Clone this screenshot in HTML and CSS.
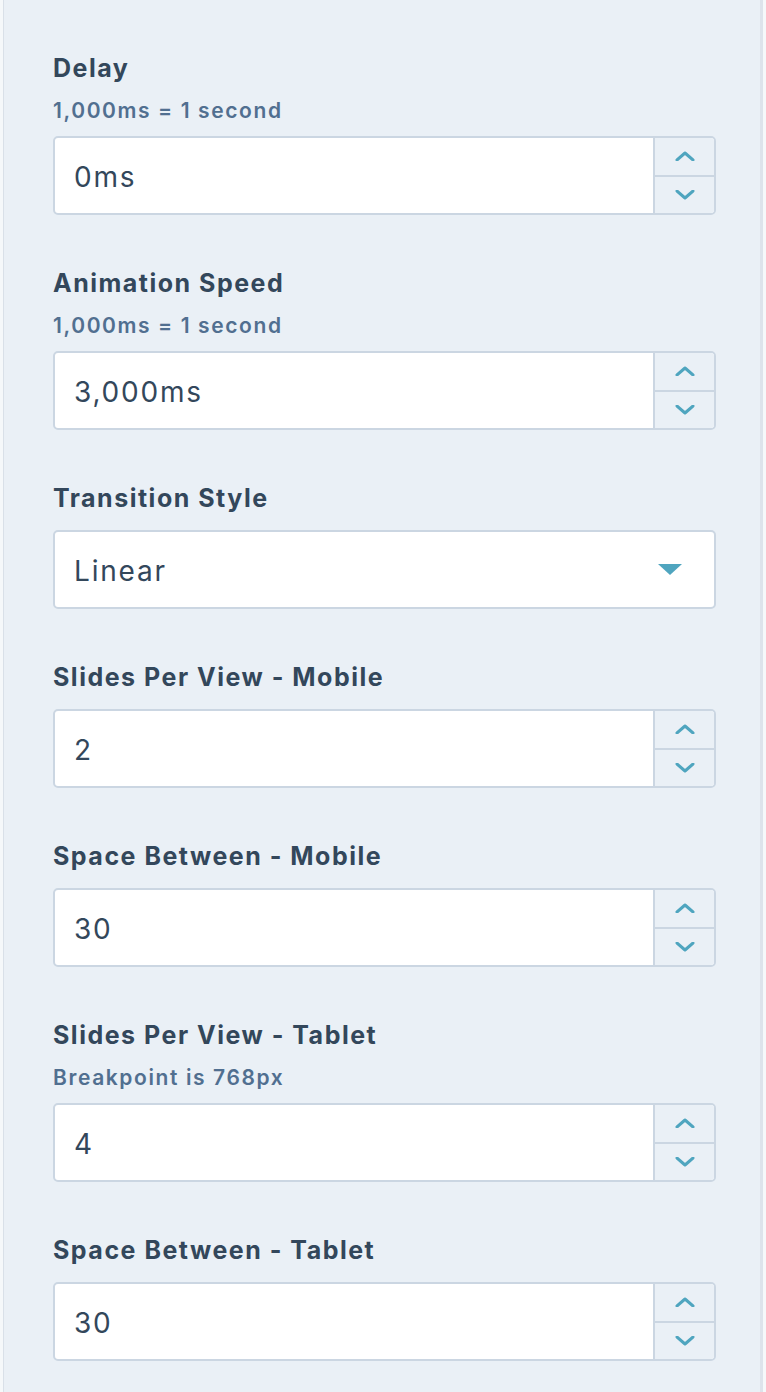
FILE: index.html
```html
<!DOCTYPE html>
<html lang="en">
<head>
    <meta charset="UTF-8">
    <meta name="viewport" content="width=device-width, initial-scale=1.0">
    <title>Slider Settings</title>
    <link rel="stylesheet" href="styles.css">
</head>
<body>

    <div class="settings-panel">

        <div class="field">
            <label class="field-label" for="delay">Delay</label>
            <p class="field-help">1,000ms = 1 second</p>
            <div class="number-input">
                <input type="text" id="delay" value="0ms">
                <div class="spinner">
                    <button class="spin-btn" aria-label="Increase"><svg viewBox="0 0 20 10" width="20" height="10"><polyline points="2,9 10,2 18,9"/></svg></button>
                    <button class="spin-btn" aria-label="Decrease"><svg viewBox="0 0 20 10" width="20" height="10"><polyline points="2,1 10,8 18,1"/></svg></button>
                </div>
            </div>
        </div>

        <div class="field">
            <label class="field-label" for="speed">Animation Speed</label>
            <p class="field-help">1,000ms = 1 second</p>
            <div class="number-input">
                <input type="text" id="speed" value="3,000ms">
                <div class="spinner">
                    <button class="spin-btn" aria-label="Increase"><svg viewBox="0 0 20 10" width="20" height="10"><polyline points="2,9 10,2 18,9"/></svg></button>
                    <button class="spin-btn" aria-label="Decrease"><svg viewBox="0 0 20 10" width="20" height="10"><polyline points="2,1 10,8 18,1"/></svg></button>
                </div>
            </div>
        </div>

        <div class="field">
            <label class="field-label" for="transition">Transition Style</label>
            <div class="select-input" id="transition">
                <span class="select-value">Linear</span>
                <svg class="select-caret" viewBox="0 0 24 11" width="24" height="11"><polygon points="0,0 24,0 12,11"/></svg>
            </div>
        </div>

        <div class="field">
            <label class="field-label" for="mobileSlides">Slides Per View - Mobile</label>
            <div class="number-input">
                <input type="text" id="mobileSlides" value="2">
                <div class="spinner">
                    <button class="spin-btn" aria-label="Increase"><svg viewBox="0 0 20 10" width="20" height="10"><polyline points="2,9 10,2 18,9"/></svg></button>
                    <button class="spin-btn" aria-label="Decrease"><svg viewBox="0 0 20 10" width="20" height="10"><polyline points="2,1 10,8 18,1"/></svg></button>
                </div>
            </div>
        </div>

        <div class="field">
            <label class="field-label" for="mobileSpace">Space Between - Mobile</label>
            <div class="number-input">
                <input type="text" id="mobileSpace" value="30">
                <div class="spinner">
                    <button class="spin-btn" aria-label="Increase"><svg viewBox="0 0 20 10" width="20" height="10"><polyline points="2,9 10,2 18,9"/></svg></button>
                    <button class="spin-btn" aria-label="Decrease"><svg viewBox="0 0 20 10" width="20" height="10"><polyline points="2,1 10,8 18,1"/></svg></button>
                </div>
            </div>
        </div>

        <div class="field">
            <label class="field-label" for="tabletSlides">Slides Per View - Tablet</label>
            <p class="field-help">Breakpoint is 768px</p>
            <div class="number-input">
                <input type="text" id="tabletSlides" value="4">
                <div class="spinner">
                    <button class="spin-btn" aria-label="Increase"><svg viewBox="0 0 20 10" width="20" height="10"><polyline points="2,9 10,2 18,9"/></svg></button>
                    <button class="spin-btn" aria-label="Decrease"><svg viewBox="0 0 20 10" width="20" height="10"><polyline points="2,1 10,8 18,1"/></svg></button>
                </div>
            </div>
        </div>

        <div class="field">
            <label class="field-label" for="tabletSpace">Space Between - Tablet</label>
            <div class="number-input">
                <input type="text" id="tabletSpace" value="30">
                <div class="spinner">
                    <button class="spin-btn" aria-label="Increase"><svg viewBox="0 0 20 10" width="20" height="10"><polyline points="2,9 10,2 18,9"/></svg></button>
                    <button class="spin-btn" aria-label="Decrease"><svg viewBox="0 0 20 10" width="20" height="10"><polyline points="2,1 10,8 18,1"/></svg></button>
                </div>
            </div>
        </div>

    </div>

</body>
</html>
```

FILE: styles.css
```css
/* Basic reset */
* {
    margin: 0;
    padding: 0;
    box-sizing: border-box;
}

body {
    font-family: 'Inter', 'Noto Sans', sans-serif;
    background-color: #f5f8fa;
    color: #33475b;
}

/* Settings Panel */
.settings-panel {
    margin-left: 3px;
    width: 760px;
    min-height: 100vh;
    background-color: #eaf0f6;
    border-left: 1px solid #d9e0e8;
    border-right: 3px solid #dde3eb;
    padding: 50px 44px 0 49px;
}

.field {
    margin-bottom: 50px;
}

.field-label {
    display: block;
    font-size: 25px;
    font-weight: 650;
    letter-spacing: 1.5px;
    line-height: 36px;
    margin-bottom: 14px;
}

.field-help {
    font-size: 21px;
    font-weight: 600;
    letter-spacing: 1.6px;
    line-height: 28px;
    color: #516f90;
    margin-top: -3px;
    margin-bottom: 11px;
}

/* Number input with spinner */
.number-input {
    display: flex;
    height: 79px;
    background-color: #fff;
    border: 2px solid #cbd6e2;
    border-radius: 5px;
    overflow: hidden;
}

.number-input input {
    flex: 1;
    min-width: 0;
    border: none;
    outline: none;
    background: transparent;
    font-family: inherit;
    font-size: 28px;
    letter-spacing: 1.8px;
    color: #33475b;
    padding: 2px 0 0 19px;
}

.spinner {
    width: 61px;
    display: flex;
    flex-direction: column;
    background-color: #eaf0f6;
    border-left: 2px solid #cbd6e2;
}

.spin-btn {
    flex: 1;
    display: flex;
    justify-content: center;
    align-items: center;
    border: none;
    background: transparent;
    cursor: pointer;
}

.spin-btn + .spin-btn {
    border-top: 2px solid #cbd6e2;
}

.spin-btn svg {
    fill: none;
    stroke: #4fa5bf;
    stroke-width: 3;
    stroke-linecap: round;
    stroke-linejoin: round;
}

/* Select */
.select-input {
    display: flex;
    justify-content: space-between;
    align-items: center;
    height: 79px;
    background-color: #fff;
    border: 2px solid #cbd6e2;
    border-radius: 5px;
    padding: 2px 32px 0 19px;
    font-size: 28px;
    letter-spacing: 1.8px;
    cursor: pointer;
}

.select-caret {
    fill: #4fa5bf;
    margin-top: -2px;
}
```
